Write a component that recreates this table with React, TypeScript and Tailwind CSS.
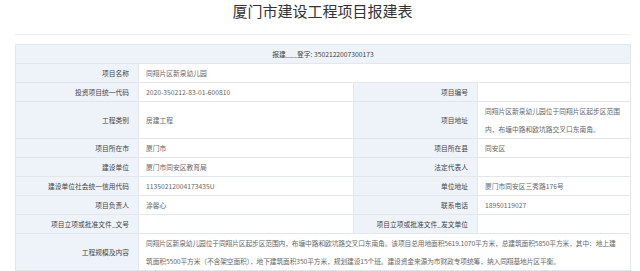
const font = { fontFamily: '"Noto Sans CJK SC", "Microsoft YaHei", sans-serif' };

type Pair = { label: string; value?: React.ReactNode; label2?: string; value2?: React.ReactNode; tall?: boolean };

const rows: Pair[] = [
  { label: '投资项目统一代码', value: '2020-350212-83-01-600810', label2: '项目编号', value2: '' },
  {
    label: '工程类别',
    value: '房建工程',
    label2: '项目地址',
    value2: (
      <>
        同翔片区新泉幼儿园位于同翔片区起步区范围
        <br />
        内，布塘中路和欧坑路交叉口东南角。
      </>
    ),
    tall: true,
  },
  { label: '项目所在市', value: '厦门市', label2: '项目所在县', value2: '同安区' },
  { label: '建设单位', value: '厦门市同安区教育局', label2: '法定代表人', value2: '' },
  { label: '建设单位社会统一信用代码', value: '11350212004173435U', label2: '单位地址', value2: '厦门市同安区三秀路176号' },
  { label: '项目负责人', value: '涂馨心', label2: '联系电话', value2: '18950119027' },
  { label: '项目立项或批准文件_文号', value: '', label2: '项目立项或批准文件_发文单位', value2: '' },
];

const labelCls = 'bg-[#eef3f9] text-[#444] text-right pr-[9px] border border-[#e3e6ea] align-middle';
const valueCls = 'bg-white text-[#666] text-left pl-[7px] pr-[6px] border border-[#e3e6ea] align-middle';

export default function App() {
  return (
    <div className="w-[640px] h-[271px] overflow-hidden bg-white pl-[15px] pr-[10px]" style={font}>
      <h1 className="text-center text-[15px] leading-[22px] text-[#333] font-normal">厦门市建设工程项目报建表</h1>
      <div className="mt-[12px] border-t border-[#eeeeee]" />
      <table className="mt-[9px] w-[615px] table-fixed border-collapse text-[6.75px] leading-[18px]">
        <colgroup>
          <col className="w-[123px]" />
          <col className="w-[215px]" />
          <col className="w-[124px]" />
          <col className="w-[153px]" />
        </colgroup>
        <tbody>
          <tr className="h-[18px]">
            <td colSpan={4} className="bg-[#eef3f9] text-[#444] text-center border border-[#e3e6ea]">
              报建___登字: 3502122007300173
            </td>
          </tr>
          <tr className="h-[19px]">
            <td className={labelCls}>项目名称</td>
            <td colSpan={3} className={valueCls}>同翔片区新泉幼儿园</td>
          </tr>
          {rows.map((r) => (
            <tr key={r.label} className={r.tall ? 'h-[37px]' : 'h-[19px]'}>
              <td className={labelCls}>{r.label}</td>
              <td className={valueCls}>{r.value}</td>
              <td className={labelCls}>{r.label2}</td>
              <td className={valueCls}>{r.value2}</td>
            </tr>
          ))}
          <tr className="h-[37px]">
            <td className={labelCls}>工程规模及内容</td>
            <td colSpan={3} className={`${valueCls} whitespace-nowrap tracking-[-0.12px]`}>
              同翔片区新泉幼儿园位于同翔片区起步区范围内，布塘中路和欧坑路交叉口东南角。该项目总用地面积5619.1070平方米，总建筑面积5850平方米，其中：地上建
              <br />
              筑面积5500平方米（不含架空面积），地下建筑面积350平方米，规划建设15个班。建设资金来源为市财政专项统筹，纳入同翔基地片区平衡。
            </td>
          </tr>
          <tr className="h-[19px]">
            <td className={labelCls}></td>
            <td className={valueCls}></td>
            <td className={labelCls}></td>
            <td className={valueCls}></td>
          </tr>
        </tbody>
      </table>
    </div>
  );
}
